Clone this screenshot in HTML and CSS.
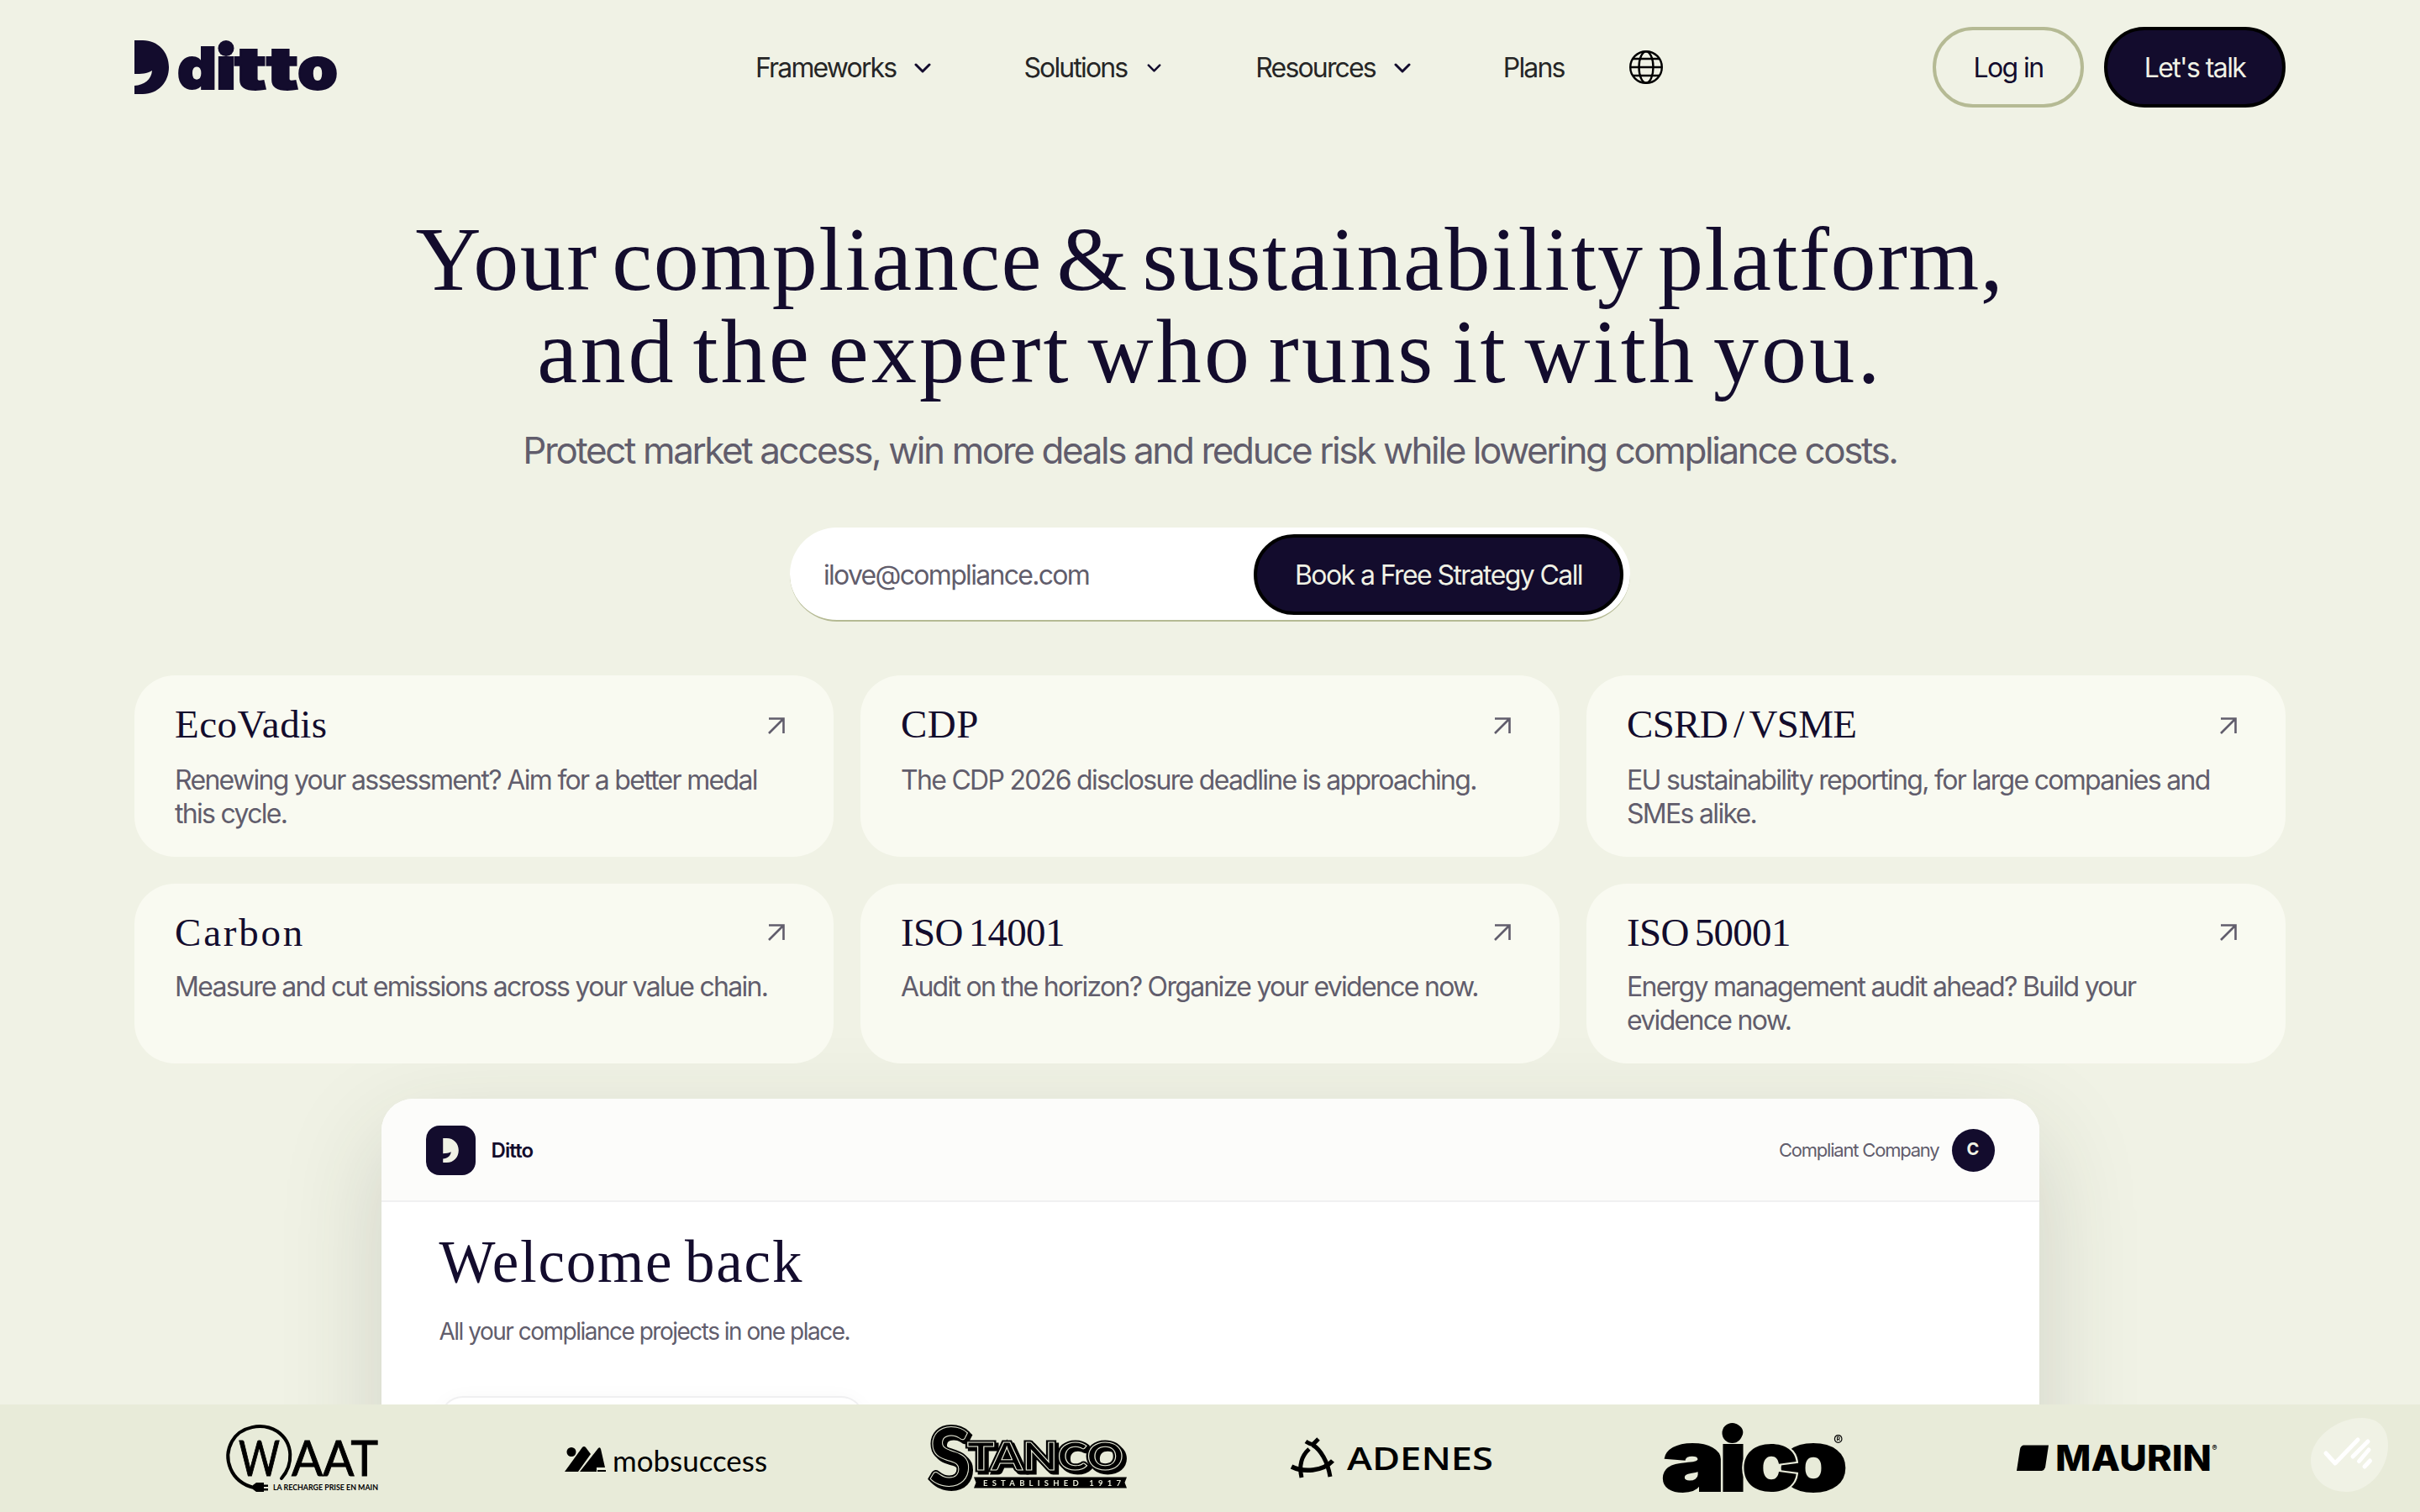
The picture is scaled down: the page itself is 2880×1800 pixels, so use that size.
FILE: index.html
```
<!DOCTYPE html>
<html lang="en">
<head>
    <meta charset="UTF-8">
    <meta name="viewport" content="width=device-width, initial-scale=1.0">
    <title>Ditto</title>
    <link rel="stylesheet" href="styles.css">
</head>
<body>
    <header class="header">
        <a class="logo" href="#">
            <svg width="244" height="66" viewBox="0 0 244 66">
                <path d="M0 0H10C28 0 41 14 41 32S28 64 10 64H0V54C12 53 20 47 21 36C15 40 8 40 0 40Z"/>
                <text class="logo-text" x="51" y="58" textLength="47" lengthAdjust="spacingAndGlyphs">d</text>
                <text class="logo-text" x="97" y="58" textLength="24" lengthAdjust="spacingAndGlyphs">i</text>
                <text class="logo-text" x="119" y="58" textLength="38" lengthAdjust="spacingAndGlyphs">t</text>
                <text class="logo-text" x="157" y="58" textLength="38" lengthAdjust="spacingAndGlyphs">t</text>
                <text class="logo-text" x="194" y="58" textLength="48" lengthAdjust="spacingAndGlyphs">o</text>
                <circle cx="109" cy="9.500" r="9.500"/>
            </svg>
        </a>
        <nav class="nav">
            <a class="nav-link" href="#">Frameworks <svg class="chevron" width="20" height="12" viewBox="0 0 20 12"><path d="M2 2l8 8 8-8"/></svg></a>
            <a class="nav-link nav-solutions" href="#">Solutions <svg class="chevron" width="17" height="10" viewBox="0 0 20 12"><path d="M2 2l8 8 8-8"/></svg></a>
            <a class="nav-link" href="#">Resources <svg class="chevron" width="20" height="12" viewBox="0 0 20 12"><path d="M2 2l8 8 8-8"/></svg></a>
            <a class="nav-link" href="#">Plans</a>
            <svg class="globe" width="40" height="40" viewBox="0 0 40 40">
                <circle cx="20" cy="20" r="18.8"/>
                <ellipse cx="20" cy="20" rx="8.5" ry="18.8"/>
                <path d="M1 20h38M4 10h32M4 30h32"/>
            </svg>
        </nav>
        <div class="header-buttons">
            <a class="btn btn-outline" href="#">Log in</a>
            <a class="btn btn-dark" href="#">Let's talk</a>
        </div>
    </header>

    <main>
        <section class="hero">
            <h1><span class="line-one">Your compliance &amp; sustainability platform,</span><br><span class="line-two">and the expert who runs it with you.</span></h1>
            <p class="subtitle">Protect market access, win more deals and reduce risk while lowering compliance costs.</p>
            <form class="email-form">
                <input class="email-input" type="email" placeholder="ilove@compliance.com">
                <button class="btn btn-dark btn-call" type="button">Book a Free Strategy Call</button>
            </form>
        </section>

        <section class="cards">
            <a class="card" href="#">
                <div class="card-top"><h2>EcoVadis</h2><svg class="arrow" width="20" height="20" viewBox="0 0 20 20"><path d="M1 1.5h17.5V19M18.5 1.5L1 19"/></svg></div>
                <p>Renewing your assessment? Aim for a better medal this cycle.</p>
            </a>
            <a class="card" href="#">
                <div class="card-top"><h2>CDP</h2><svg class="arrow" width="20" height="20" viewBox="0 0 20 20"><path d="M1 1.5h17.5V19M18.5 1.5L1 19"/></svg></div>
                <p>The CDP 2026 disclosure deadline is approaching.</p>
            </a>
            <a class="card" href="#">
                <div class="card-top"><h2 class="tight">CSRD / VSME</h2><svg class="arrow" width="20" height="20" viewBox="0 0 20 20"><path d="M1 1.5h17.5V19M18.5 1.5L1 19"/></svg></div>
                <p>EU sustainability reporting, for large companies and SMEs alike.</p>
            </a>
            <a class="card card-low" href="#">
                <div class="card-top"><h2 class="wide">Carbon</h2><svg class="arrow" width="20" height="20" viewBox="0 0 20 20"><path d="M1 1.5h17.5V19M18.5 1.5L1 19"/></svg></div>
                <p>Measure and cut emissions across your value chain.</p>
            </a>
            <a class="card card-low" href="#">
                <div class="card-top"><h2 class="tight">ISO 14001</h2><svg class="arrow" width="20" height="20" viewBox="0 0 20 20"><path d="M1 1.5h17.5V19M18.5 1.5L1 19"/></svg></div>
                <p>Audit on the horizon? Organize your evidence now.</p>
            </a>
            <a class="card card-low" href="#">
                <div class="card-top"><h2 class="tight">ISO 50001</h2><svg class="arrow" width="20" height="20" viewBox="0 0 20 20"><path d="M1 1.5h17.5V19M18.5 1.5L1 19"/></svg></div>
                <p>Energy management audit ahead? Build your evidence now.</p>
            </a>
        </section>

        <section class="dashboard">
            <div class="dashboard-header">
                <div class="dashboard-icon">
                    <svg width="19" height="29" viewBox="0 0 41 64"><path d="M0 0H10C28 0 41 14 41 32S28 64 10 64H0V54C12 53 20 47 21 36C15 40 8 40 0 40Z"/></svg>
                </div>
                <span class="dashboard-name">Ditto</span>
                <span class="company">Compliant Company</span>
                <span class="avatar">C</span>
            </div>
            <div class="dashboard-body">
                <h2>Welcome back</h2>
                <p>All your compliance projects in one place.</p>
                <div class="project-card"></div>
            </div>
        </section>
    </main>

    <footer class="clients">
        <svg class="client" viewBox="0 0 240 80">
            <path class="line" d="M95 64C109 48 110 22 90 8C72 -3 46 2 36 20C25 40 34 68 62 75" stroke-width="4" stroke-linecap="round"/>
            <path d="M61 72l4-3h9v2.500h5v2.500h-5v2h5v2.500h-5V80h-9l-4-3z"/>
            <text class="waat" x="44" y="61" textLength="49" lengthAdjust="spacingAndGlyphs">W</text>
            <text class="waat" x="107" y="61" textLength="103" lengthAdjust="spacingAndGlyphs">AAT</text>
            <text class="waat-tag" x="85" y="78" textLength="125" lengthAdjust="spacingAndGlyphs">LA RECHARGE PRISE EN MAIN</text>
        </svg>
        <svg class="client" viewBox="0 0 240 80">
            <circle cx="8" cy="32.500" r="5.500"/>
            <path d="M0 56L21 27Q23 25 25 27L31 35L16 56zM18 56L40 28Q42 26 43 29L48 51H38V56z"/>
            <path d="M39 54h10v2H39z"/>
            <text class="mobsuccess" x="57" y="56" textLength="184" lengthAdjust="spacingAndGlyphs">mobsuccess</text>
        </svg>
        <svg class="client" viewBox="0 0 240 80">
            <g class="stanco-shadow">
                <text class="stanco-s" x="4" y="76" textLength="51" lengthAdjust="spacingAndGlyphs">S</text>
                <text class="stanco" x="50" y="57" textLength="186" lengthAdjust="spacingAndGlyphs">TANCO</text>
            </g>
            <g class="stanco-back">
                <text class="stanco-s" x="1" y="73" textLength="51" lengthAdjust="spacingAndGlyphs">S</text>
                <text class="stanco" x="47" y="54" textLength="186" lengthAdjust="spacingAndGlyphs">TANCO</text>
            </g>
            <g class="stanco-front">
                <text class="stanco-s" x="1" y="73" textLength="51" lengthAdjust="spacingAndGlyphs">S</text>
                <text class="stanco" x="47" y="54" textLength="186" lengthAdjust="spacingAndGlyphs">TANCO</text>
            </g>
            <path d="M55 62.500H237L234.500 69L237 75.500H55L57.500 69z"/>
            <text class="stanco-tag" x="66" y="72.500" textLength="164">ESTABLISHED 1917</text>
        </svg>
        <svg class="client" viewBox="0 0 240 80">
            <path class="line" d="M22 29C12 38 10 50 13 63" stroke-width="5"/>
            <path class="line" d="M18 20Q24 24 27 23L33 17M26 24C36 30 44 44 47 62" stroke-width="5"/>
            <path class="line" d="M1 50C15 57 38 56 50 43" stroke-width="5.500"/>
            <text class="adenes" x="67" y="53.500" textLength="174" lengthAdjust="spacingAndGlyphs">ADENES</text>
        </svg>
        <svg class="client" viewBox="0 0 240 80">
            <text class="aico" x="9" y="79" textLength="76" lengthAdjust="spacingAndGlyphs">a</text>
            <text class="aico" x="78" y="79" textLength="33" lengthAdjust="spacingAndGlyphs">i</text>
            <text class="aico" x="149" y="79" textLength="82" lengthAdjust="spacingAndGlyphs">o</text>
            <text class="aico aico-c" x="104" y="79" textLength="69" lengthAdjust="spacingAndGlyphs">c</text>
            <circle cx="93.500" cy="10" r="12"/>
            <text class="registered" x="214" y="25">®</text>
        </svg>
        <svg class="client" viewBox="0 0 240 80">
            <path d="M8 24.500H38L34 51Q33 54 30 55H0L4 29Q5 25 8 24.500z"/>
            <text class="maurin" x="46" y="55" textLength="186" lengthAdjust="spacingAndGlyphs">MAURIN</text>
            <text class="registered-small" x="232.500" y="31">®</text>
        </svg>
    </footer>

    <div class="consent">
        <svg width="92" height="88" viewBox="0 0 92 88">
            <path class="consent-bg" d="M61 0C82 0 92 14 92 33C92 62 68 88 43 88C18 88 0 72 0 50C0 25 30 0 61 0z"/>
            <path class="consent-check" d="M18 42L29 54L56 26M68 28L50 46M69 38L57.500 51.500M70.500 51L64 58"/>
        </svg>
    </div>
</body>
</html>
```
FILE: styles.css
```
* {
    box-sizing: border-box;
}
body {
    margin: 0;
    height: 1800px;
    overflow: hidden;
    background-color: #f0f2e5;
    color: #130c2d;
    font-family: Inter, "Liberation Sans", sans-serif;
}
a {
    color: inherit;
    text-decoration: none;
}
h1, h2, p {
    margin: 0;
    font-weight: 400;
}
h1, h2 {
    font-family: "Liberation Serif", serif;
}
main {
    height: 1640px;
    overflow: hidden;
}

/* Header */
.header {
    display: grid;
    grid-template-columns: 739px 1fr auto;
    align-items: center;
    height: 160px;
    padding: 0 160px;
}
.logo {
    height: 64px;
}
.logo svg {
    fill: #130c2d;
    overflow: visible;
}
.logo-text {
    font-size: 69px;
    font-weight: 900;
    stroke: #130c2d;
    stroke-width: 2px;
}
.nav {
    display: flex;
    align-items: center;
    gap: 110px;
}
.nav-link {
    display: flex;
    align-items: center;
    gap: 22px;
    padding-top: 1px;
    font-size: 32px;
    line-height: 48px;
    letter-spacing: -1.85px;
    color: #262626;
}
.nav-solutions {
    gap: 24px;
    margin-right: 2px;
}
.chevron {
    fill: none;
    stroke: #130c2d;
    stroke-width: 3;
    stroke-linecap: round;
    stroke-linejoin: round;
}
.globe {
    margin-left: -33px;
    fill: none;
    stroke: #000;
    stroke-width: 2.4;
}
.header-buttons {
    display: flex;
    gap: 24px;
}
.btn {
    display: flex;
    align-items: center;
    justify-content: center;
    height: 96px;
    border: 4px solid #000;
    border-radius: 48px;
    font-family: inherit;
    font-size: 32px;
    letter-spacing: -1.6px;
}
.btn-outline {
    width: 180px;
    border-color: #b5ba94;
}
.btn-dark {
    width: 216px;
    background: #130c2d;
    color: #f0f2e5;
}

/* Hero */
.hero {
    display: flex;
    flex-direction: column;
    align-items: center;
    padding-top: 94px;
}
.hero h1 {
    font-size: 108px;
    line-height: 110px;
    text-align: center;
    white-space: nowrap;
}
.line-one {
    letter-spacing: 1.5px;
    word-spacing: -12px;
}
.line-two {
    letter-spacing: 3.2px;
    word-spacing: -10.5px;
}
.subtitle {
    margin-top: 32px;
    font-size: 44px;
    line-height: 60px;
    letter-spacing: -2.4px;
    white-space: nowrap;
    color: #615d6c;
}
.email-form {
    display: flex;
    align-items: center;
    width: 1000px;
    height: 112px;
    margin-top: 62px;
    padding: 2px 8px 0 40px;
    background: #fff;
    border-bottom: 2px solid #b5ba94;
    border-radius: 56px;
}
.email-input {
    flex: 1;
    padding: 1px 0 0;
    border: 0;
    outline: 0;
    background: none;
    font-family: inherit;
    font-size: 32px;
    letter-spacing: -1.7px;
}
.email-input::placeholder {
    color: #615d6c;
}
.btn-call {
    width: 440px;
}

/* Framework cards */
.cards {
    display: grid;
    grid-template-columns: repeat(3, 832px);
    grid-template-rows: 216px 214px;
    gap: 32px;
    padding: 64px 160px 42px;
}
.card {
    padding: 30px 58px 0 48px;
    background: #f9faf1;
    border-radius: 48px;
}
.card-top {
    display: flex;
    justify-content: space-between;
}
.card h2 {
    font-size: 47px;
    line-height: 56px;
    letter-spacing: 0.5px;
}
.card .wide {
    letter-spacing: 2.8px;
}
.card .tight {
    letter-spacing: -0.7px;
    word-spacing: -4px;
}
.arrow {
    margin-top: 20px;
    fill: none;
    stroke: #615d6c;
    stroke-width: 2.6;
}
.card p {
    margin: 19px -10px 0 0;
    font-size: 32px;
    line-height: 40px;
    letter-spacing: -1.7px;
    color: #615d6c;
}
.card-low .arrow {
    margin-top: 18px;
}
.card-low p {
    margin-top: 17px;
}

/* Dashboard preview */
.dashboard {
    width: 1973px;
    height: 900px;
    margin: 0 auto;
    overflow: hidden;
    background: #fff;
    border-radius: 38px;
    box-shadow: 0 44px 120px rgba(50, 55, 40, 0.17);
}
.dashboard-header {
    display: flex;
    align-items: center;
    height: 123px;
    padding: 1px 53px 0;
    background: #fcfcfa;
    border-bottom: 2px solid #f0f0f1;
}
.dashboard-icon {
    display: flex;
    align-items: center;
    justify-content: center;
    width: 59px;
    height: 59px;
    background: #130c2d;
    border-radius: 16px;
}
.dashboard-icon svg {
    fill: #f0f2e5;
}
.dashboard-name {
    margin-left: 19px;
    font-size: 24px;
    font-weight: 600;
    letter-spacing: -0.9px;
}
.company {
    margin-left: auto;
    font-size: 22px;
    letter-spacing: -1.2px;
    color: #615d6c;
}
.avatar {
    width: 51px;
    height: 51px;
    margin-left: 15px;
    border-radius: 50%;
    background: #130c2d;
    color: #f0f2e5;
    font-size: 20px;
    font-weight: 700;
    line-height: 49px;
    text-align: center;
}
.dashboard-body {
    padding: 31px 69px;
}
.dashboard-body h2 {
    font-size: 71px;
    line-height: 80px;
    letter-spacing: 1.8px;
    word-spacing: -6px;
}
.dashboard-body p {
    margin-top: 23px;
    font-size: 28px;
    line-height: 40px;
    letter-spacing: -1.5px;
    color: #615d6c;
}
.project-card {
    width: 506px;
    height: 300px;
    margin-top: 57px;
    border: 2px solid #f0f0f1;
    border-radius: 28px;
    box-shadow: 0 2px 24px rgba(19, 12, 45, 0.03);
}

/* Client logos */
.clients {
    position: fixed;
    left: 0;
    right: 0;
    bottom: 0;
    display: grid;
    grid-template-columns: repeat(6, 240px);
    gap: 192px;
    align-items: center;
    height: 128px;
    padding: 0 240px;
    background: #e8ebd9;
}
.client {
    width: 240px;
    height: 80px;
    overflow: visible;
}
.line {
    fill: none;
    stroke: #000;
}
.waat {
    font-family: Lato, sans-serif;
    font-size: 59px;
    stroke: #000;
    stroke-width: 1px;
}
.waat-tag {
    font-family: Lato, sans-serif;
    font-size: 9.7px;
    font-weight: 700;
}
.mobsuccess {
    font-family: Lato, sans-serif;
    font-size: 34px;
}
.stanco-s,
.stanco {
    font-family: Lato, sans-serif;
    font-weight: 700;
}
.stanco-s {
    font-size: 96px;
}
.stanco {
    font-size: 46px;
}
.stanco-shadow,
.stanco-back {
    stroke: #000;
    stroke-width: 5px;
}
.stanco-front {
    stroke: #e8ebd9;
    stroke-width: 1px;
}
.stanco-tag {
    font-family: Lato, sans-serif;
    font-size: 9.5px;
    font-weight: 700;
    fill: #e8ebd9;
}
.adenes {
    font-family: "Open Sans", sans-serif;
    font-size: 38px;
    font-weight: 600;
}
.aico {
    font-size: 101px;
    font-weight: 900;
    stroke: #000;
    stroke-width: 2px;
}
.aico-c {
    stroke: #e8ebd9;
    stroke-width: 4px;
    paint-order: stroke;
}
.registered {
    font-size: 17px;
}
.maurin {
    font-size: 43px;
    font-weight: 800;
}
.registered-small {
    font-size: 9px;
    font-weight: 700;
}

/* Cookie consent button */
.consent {
    position: fixed;
    right: 38px;
    bottom: 24px;
    height: 88px;
}
.consent-bg {
    fill: #f0f2e5;
}
.consent-check {
    fill: none;
    stroke: #fff;
    stroke-width: 5;
    stroke-linecap: round;
    stroke-linejoin: round;
}
```
